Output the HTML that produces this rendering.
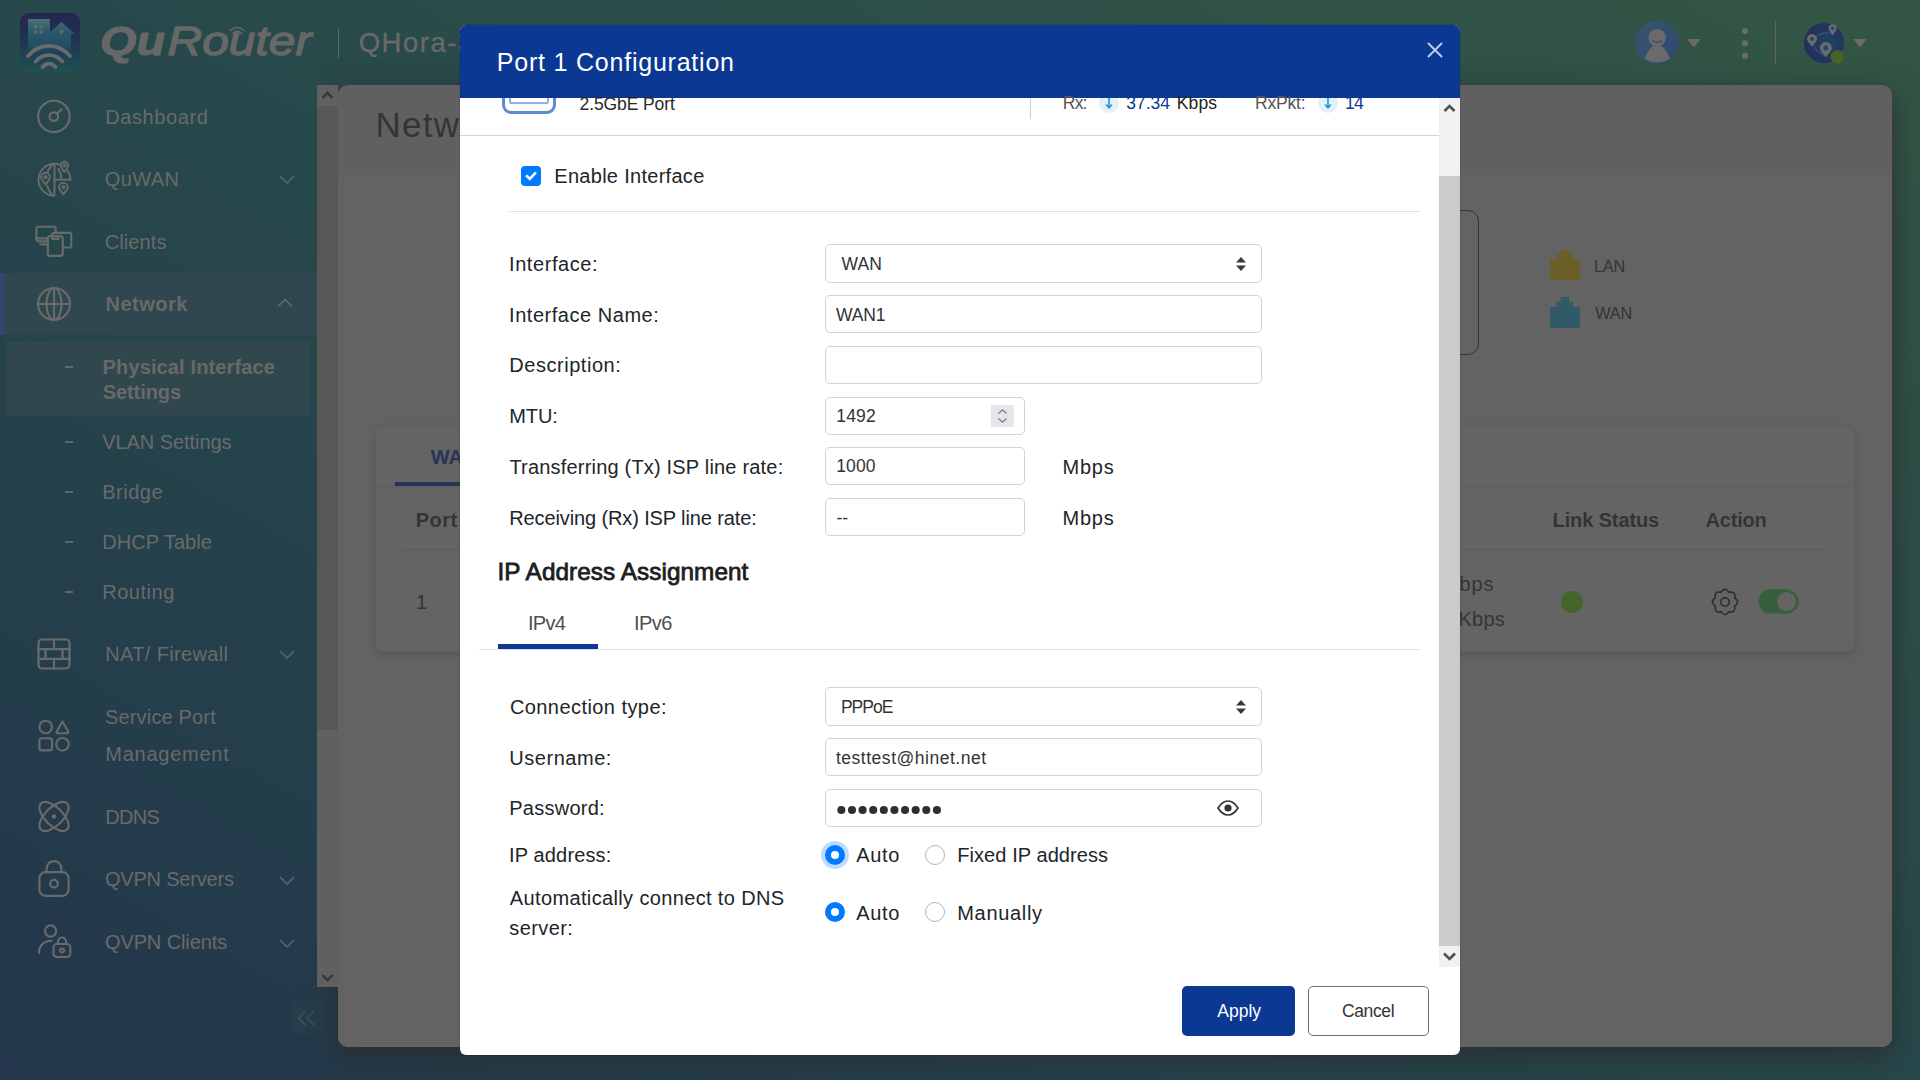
<!DOCTYPE html>
<html lang="en">
<head>
<meta charset="utf-8">
<title>QuRouter - Port 1 Configuration</title>
<style>
*{box-sizing:border-box;margin:0;padding:0}
html,body{width:1920px;height:1080px;overflow:hidden}
body{position:relative;font-family:"Liberation Sans",sans-serif;
 background:linear-gradient(to top right,#23364b 0%,#25434b 35%,#27484b 50%,#2c4e49 70%,#345644 100%);}
.a{position:absolute}
.t{position:absolute;white-space:nowrap;line-height:1}
svg{position:absolute;overflow:visible}
.ic{fill:none;stroke:#6a6a6a;stroke-linecap:round;stroke-linejoin:round}
.dash{position:absolute;left:65px;width:8px;height:2px;background:#5f666b}
.inp{position:absolute;left:825px;height:38px;background:#fff;border:1px solid #ced4da;border-radius:5px}
</style>
</head>
<body>
<!-- ===== page shell (dimmed by modal backdrop) ===== -->
<!-- app logo tile -->
<div class="a" style="left:20px;top:13px;width:60px;height:60px;border-radius:9px;background:linear-gradient(180deg,#252651 0%,#232d54 30%,#1f4054 68%,#214f4f 100%);overflow:hidden">
 <svg width="60" height="60" viewBox="0 0 60 60" style="left:0;top:0">
  <defs><linearGradient id="bld" x1="0" y1="0" x2="0" y2="1"><stop offset="0" stop-color="#4a7177"/><stop offset="0.4" stop-color="#26586a"/><stop offset="0.8" stop-color="#224e66"/><stop offset="1" stop-color="#22506a" stop-opacity="0.15"/></linearGradient></defs>
  <path d="M8 6 H30 V19 L41.5 9 L55 21 H51 V40 H8 Z" fill="url(#bld)"/>
  <g fill="#6a6866"><rect x="14" y="12" width="3.4" height="3.4"/><rect x="19.5" y="12" width="3.4" height="3.4"/><rect x="14" y="17.3" width="3.4" height="3.4"/><rect x="19.5" y="17.3" width="3.4" height="3.4"/><rect x="39.8" y="17" width="3.4" height="3.4"/></g>
  <g fill="none" stroke="#6b6b6b" stroke-width="3.700" stroke-linecap="round">
   <path d="M8 43 C 20 29.5, 38 29.5, 50 43"/>
   <path d="M15.5 48.5 C 23 40, 35 40, 42.5 48.5"/>
   <path d="M22.5 54 C 26.5 49.5, 31.5 49.5, 35.5 54"/>
  </g>
 </svg>
</div>
<!-- QuRouter wordmark -->
<svg width="215" height="44" viewBox="0 0 215 44" style="left:99px;top:20px">
 <text y="35.300" font-family="Liberation Sans, sans-serif" font-size="40.500" font-style="italic" fill="#676767" stroke="#676767" stroke-linejoin="round"><tspan x="1" font-weight="700" stroke-width="1" textLength="65" lengthAdjust="spacingAndGlyphs">Qu</tspan><tspan x="68.500" font-weight="400" stroke-width="1.300" textLength="144" lengthAdjust="spacingAndGlyphs">Router</tspan></text>
 <g fill="none" stroke="#676767" stroke-width="1.600" stroke-linecap="round"><path d="M131.500 10.500 Q138.300 4.500 145.100 10.500"/><path d="M134 13.300 Q138.300 9.500 142.600 13.300"/></g>
 <circle cx="138.300" cy="16.300" r="1.500" fill="#676767"/>
</svg>
<div class="a" style="left:338px;top:28px;width:1px;height:30px;background:#5a6a68"></div>

<!-- sidebar active bands -->
<div class="a" style="left:0;top:273px;width:317px;height:62px;background:#2f474e"></div>
<div class="a" style="left:0;top:273px;width:4px;height:62px;background:#36436b"></div>
<div class="a" style="left:6px;top:341px;width:304px;height:75px;background:#30474e"></div>
<div class="dash" style="top:366px"></div>
<div class="dash" style="top:441px"></div>
<div class="dash" style="top:491px"></div>
<div class="dash" style="top:541px"></div>
<div class="dash" style="top:591px"></div>

<!-- sidebar icons -->
<svg width="40" height="40" viewBox="0 0 40 40" style="left:34px;top:96px" class="ic" stroke-width="2.150">
 <circle cx="19.900" cy="20.400" r="15.700"/><circle cx="19.800" cy="20.600" r="4.300"/><path d="M23 17.500 L27.600 13.300"/>
</svg>
<svg width="40" height="40" viewBox="0 0 40 40" style="left:34px;top:159px" class="ic" stroke-width="1.900">
 <path d="M20.500 4.700 A16 16 0 0 0 20.500 36.700 Z"/>
 <path d="M20.500 20.700 H36.300"/>
 <path d="M20.500 4.700 A16 16 0 0 1 26 5.700"/>
 <path d="M33.300 11.200 A16 16 0 0 1 36.500 20.700"/>
 <path d="M19.500 5 Q 15 8.500 13.700 12.800"/>
 <path d="M13.300 27 Q 14.800 32.800 19.500 36.400"/>
 <path d="M24.300 9.800 Q 27.300 14.500 27.500 20.700"/>
 <path d="M11.500 25.600 C 9 22.300 7.100 20.400 7.100 18.200 A4.400 4.400 0 0 1 15.900 18.200 C 15.900 20.400 14 22.300 11.500 25.600 Z"/><circle cx="11.500" cy="18.200" r="1.200"/>
 <path d="M30.400 12.800 C 28.300 10 26.700 8.400 26.700 6.500 A3.700 3.700 0 0 1 34.100 6.500 C 34.100 8.400 32.500 10 30.400 12.800 Z"/><circle cx="30.400" cy="6.500" r="1"/>
 <path d="M29.300 35.300 C 26.800 32 24.900 30.400 24.900 28.200 A4.400 4.400 0 0 1 33.700 28.200 C 33.700 30.400 31.800 32 29.300 35.300 Z"/><circle cx="29.300" cy="28.200" r="1.200"/>
</svg>
<svg width="40" height="40" viewBox="0 0 40 40" style="left:34px;top:221px" class="ic" stroke-width="2.150">
 <path d="M13.800 20.300 H4.400 a2 2 0 0 1-2-2 V7.700 a2 2 0 0 1 2-2 H19.800 a2 2 0 0 1 2 2 V11.500"/>
 <path d="M2.400 17.300 H13.800"/><path d="M6.300 23.400 H13.800"/>
 <path d="M18.200 15 V13.800 a2 2 0 0 1 2-2 H35.300 a2 2 0 0 1 2 2 V24.500 a2 2 0 0 1-2 2 H28.800"/>
 <rect x="13.800" y="15.100" width="15" height="19.800" rx="2.500"/>
 <path d="M18.200 15.300 v2.600 h6.100 v-2.600"/>
</svg>
<svg width="40" height="40" viewBox="0 0 40 40" style="left:34px;top:284px" class="ic" stroke-width="2.150">
 <circle cx="20" cy="20" r="16"/><ellipse cx="20" cy="20" rx="7.500" ry="16"/><path d="M4 20 H36 M20 4 V36"/>
</svg>
<svg width="40" height="40" viewBox="0 0 40 40" style="left:34px;top:634px" class="ic" stroke-width="2.200">
 <rect x="4.500" y="5.500" width="31" height="29" rx="3.500"/>
 <path d="M4.500 15.200 H35.500 M4.500 24.800 H35.500 M20 5.500 V15.200 M20 24.800 V34.500 M11.500 15.200 V24.800 M28.500 15.200 V24.800"/>
</svg>
<svg width="40" height="40" viewBox="0 0 40 40" style="left:34px;top:715px" class="ic" stroke-width="2.100">
 <circle cx="11.700" cy="12" r="6.300"/>
 <path d="M28.500 6.500 L34.300 16.500 a1.200 1.200 0 0 1-1 1.800 H23.700 a1.200 1.200 0 0 1-1-1.800 Z"/>
 <rect x="5.400" y="23.200" width="12.600" height="12.200" rx="2.400"/>
 <circle cx="28.500" cy="29.300" r="6.300"/>
</svg>
<svg width="40" height="40" viewBox="0 0 40 40" style="left:34px;top:796px" class="ic" stroke-width="2.100">
 <ellipse cx="20" cy="20.500" rx="18.500" ry="9" transform="rotate(45 20 20.500)"/>
 <ellipse cx="20" cy="20.500" rx="18.500" ry="9" transform="rotate(-45 20 20.500)"/>
 <circle cx="20" cy="20.500" r="2.300" fill="#6a6a6a" stroke="none"/>
</svg>
<svg width="40" height="40" viewBox="0 0 40 40" style="left:34px;top:858px" class="ic" stroke-width="2.200">
 <rect x="5.400" y="14.200" width="29.200" height="23.600" rx="6"/>
 <path d="M12.700 14 V10.500 a7.300 7.300 0 0 1 14.600 0 V14"/>
 <circle cx="20" cy="25.700" r="3.800"/>
</svg>
<svg width="40" height="40" viewBox="0 0 40 40" style="left:34px;top:921px" class="ic" stroke-width="2.100">
 <circle cx="16.600" cy="10" r="5.600"/>
 <path d="M5 32 C 5 25, 9.500 20, 17.500 19.800"/>
 <rect x="19.500" y="23" width="16.800" height="13" rx="3.200"/>
 <path d="M24 22.800 v-2.300 a4 4 0 0 1 8 0 v2.300"/>
 <circle cx="28" cy="29.500" r="2"/>
</svg>
<!-- chevrons -->
<svg width="16" height="10" viewBox="0 0 16 10" style="left:279px;top:175px;stroke:#59666b" class="ic" stroke-width="1.600"><path d="M1.500 1.500 L8 8 L14.500 1.500"/></svg>
<svg width="16" height="10" viewBox="0 0 16 10" style="left:277px;top:298px;stroke:#666b6d" class="ic" stroke-width="1.600"><path d="M1.500 8 L8 1.500 L14.500 8"/></svg>
<svg width="16" height="10" viewBox="0 0 16 10" style="left:279px;top:650px;stroke:#59666b" class="ic" stroke-width="1.600"><path d="M1.500 1.500 L8 8 L14.500 1.500"/></svg>
<svg width="16" height="10" viewBox="0 0 16 10" style="left:279px;top:876px;stroke:#59666b" class="ic" stroke-width="1.600"><path d="M1.500 1.500 L8 8 L14.500 1.500"/></svg>
<svg width="16" height="10" viewBox="0 0 16 10" style="left:279px;top:939px;stroke:#59666b" class="ic" stroke-width="1.600"><path d="M1.500 1.500 L8 8 L14.500 1.500"/></svg>
<!-- collapse button -->
<div class="a" style="left:291px;top:1000px;width:34px;height:34px;border-radius:5px;background:#273d4b"></div>
<svg width="20" height="16" viewBox="0 0 20 16" style="left:296px;top:1010px" fill="none" stroke="#3b4e5b" stroke-width="1.800" stroke-linecap="round" stroke-linejoin="round"><path d="M9 1.500 L2.500 8 L9 14.500 M17.500 1.500 L11 8 L17.500 14.500"/></svg>

<!-- main panel -->
<div class="a" style="left:338px;top:85px;width:1554px;height:962px;border-radius:10px;background:#606060;box-shadow:0 10px 30px 1px rgba(42,44,46,.88);clip-path:polygon(-21px -60px,1620px -60px,1620px 1030px,-70px 1030px,-70px 902px,-21px 902px)"></div>
<div class="a" style="left:338px;top:175px;width:1554px;height:872px;border-radius:8px 8px 10px 10px;background:#636363"></div>
<!-- sidebar scrollbar -->
<div class="a" style="left:317px;top:85px;width:21px;height:902px;background:#606060"></div>
<div class="a" style="left:317px;top:106px;width:21px;height:624px;background:#575757"></div>
<svg width="21" height="21" viewBox="0 0 21 21" style="left:317px;top:85px" fill="none" stroke="#363636" stroke-width="2.400"><path d="M5.500 13 L10.500 8 L15.500 13"/></svg>
<svg width="21" height="21" viewBox="0 0 21 21" style="left:317px;top:967px" fill="none" stroke="#363636" stroke-width="2.400"><path d="M5.500 8 L10.500 13 L15.500 8"/></svg>

<!-- device outline -->
<div class="a" style="left:600px;top:210px;width:879px;height:145px;border:1px solid #363636;border-radius:11px"></div>
<!-- legend -->
<svg width="30" height="30" viewBox="0 0 30 30" style="left:1550px;top:250px"><path d="M0 30 V9.500 H6.500 V4 H10.500 V0 H19 V4 H23 V9.500 H30 V30 Z" fill="#6b5f27"/></svg>
<svg width="30" height="31" viewBox="0 0 30 31" style="left:1550px;top:297px"><path d="M0 31 V10 H6.500 V4.500 H10.500 V0 H19 V4.500 H23 V10 H30 V31 Z" fill="#315a68"/></svg>
<!-- table card -->
<div class="a" style="left:375px;top:425px;width:1480px;height:227px;border-radius:9px;background:#646464;border:1px solid #5f5f5f;box-shadow:0 3px 8px rgba(0,0,0,.12)"></div>
<div class="a" style="left:376px;top:486px;width:1478px;height:1px;background:#5d5d5d"></div>
<div class="a" style="left:395px;top:482px;width:160px;height:3.500px;background:#263555"></div>
<div class="a" style="left:401px;top:549px;width:1428px;height:2px;background:#5f5f5f"></div>
<div class="a" style="left:1561.300px;top:591px;width:21.500px;height:21.500px;border-radius:50%;background:#46652a"></div>
<svg width="30" height="30" viewBox="-15 -15 30 30" style="left:1709.600px;top:586.500px" fill="none" stroke="#2b2b2b" stroke-width="1.500" stroke-linejoin="miter">
 <path d="M-4.02 -9.70 Q0.00 -15.60 4.02 -9.70 Q11.03 -11.03 9.70 -4.02 Q15.60 -0.00 9.70 4.02 Q11.03 11.03 4.02 9.70 Q0.00 15.60 -4.02 9.70 Q-11.03 11.03 -9.70 4.02 Q-15.60 0.00 -9.70 -4.02 Q-11.03 -11.03 -4.02 -9.70 Z"/>
 <circle cx="0" cy="0" r="4.200"/>
</svg>
<div class="a" style="left:1758px;top:589px;width:41px;height:25px;border-radius:13px;background:#365e3e;border:1.500px solid #3a6942"></div>
<div class="a" style="left:1776.600px;top:592px;width:19px;height:19px;border-radius:50%;background:#646464"></div>

<!-- top-right header icons -->
<div class="a" style="left:1635px;top:21px;width:43.500px;height:43px;border-radius:50%;background:linear-gradient(135deg,#3a5568 0%,#334f70 50%,#2d4872 100%);overflow:hidden">
 <svg width="44" height="43" viewBox="0 0 44 43" style="left:0;top:0"><path d="M22.200 23.500 C 16 23.500 11 33 9.500 38 Q 22.200 45 34.900 38 C 33.400 33 28.400 23.500 22.200 23.500 Z" fill="#6a6a6a"/><circle cx="22.200" cy="16.800" r="8.800" fill="#6a6a6a"/><path d="M17.800 19.700 Q22.200 23.300 26.600 19.700" fill="none" stroke="#334f70" stroke-width="1.300" stroke-linecap="round"/></svg>
</div>
<svg width="14" height="9" viewBox="0 0 14 9" style="left:1687.300px;top:39px"><path d="M0 0 H13.700 L6.850 8.500 Z" fill="#6a6a6a"/></svg>
<svg width="8" height="32" viewBox="0 0 8 32" style="left:1740.800px;top:26.600px" fill="#6a6a6a"><circle cx="4" cy="4" r="3.100"/><circle cx="4" cy="16.300" r="3.100"/><circle cx="4" cy="28.800" r="3.100"/></svg>
<div class="a" style="left:1775px;top:21px;width:1px;height:43px;background:#645f68"></div>
<div class="a" style="left:1803.500px;top:22.500px;width:40px;height:40px;border-radius:50%;background:radial-gradient(circle at 62% 50%,#1f4560 0%,#22355f 45%,#212d52 100%)"></div>
<svg width="44" height="44" viewBox="0 0 44 44" style="left:1802px;top:21px">
 <path d="M11 20 Q 18 9 30 13 M12 24 Q 14 32 23 34" fill="none" stroke="#38537c" stroke-width="1.100"/>
 <g fill="#6b6b6b"><path d="M30.600 14.500 c-2.300-3-4-5-4-7.200 a4 4 0 0 1 8 0 c0 2.200-1.700 4.200-4 7.200z"/><path d="M10 25.800 c-2.800-3.700-5-5.700-5-7.700 a5 5 0 0 1 10 0 c0 2-2.200 4-5 7.700z"/><path d="M23.800 36.400 c-3.400-4.600-6-7-6-9.500 a6 6 0 0 1 12 0 c0 2.500-2.600 4.900-6 9.500z"/></g>
 <g fill="#22487a"><circle cx="30.600" cy="7.300" r="1.700"/><circle cx="10" cy="18.100" r="2.100"/><circle cx="23.800" cy="26.900" r="2.500"/></g>
 <circle cx="35.300" cy="35.700" r="6.800" fill="#476425"/>
</svg>
<svg width="14" height="9" viewBox="0 0 14 9" style="left:1852.900px;top:39px"><path d="M0 0 H14 L7 8.500 Z" fill="#6a6a6a"/></svg>

<span class="t" style="left:358.70px;top:29.22px;font-size:27.5px;color:#696969;letter-spacing:1.5px;-webkit-text-stroke:0.35px #696969;">QHora-301W</span>
<span class="t" style="left:105.26px;top:106.57px;font-size:20px;color:#6a6a6a;letter-spacing:0.598px;">Dashboard</span>
<span class="t" style="left:104.85px;top:169.07px;font-size:20px;color:#6a6a6a;letter-spacing:0.367px;">QuWAN</span>
<span class="t" style="left:104.78px;top:231.57px;font-size:20px;color:#6a6a6a;letter-spacing:0.083px;">Clients</span>
<span class="t" style="left:105.56px;top:293.87px;font-size:20px;color:#696969;font-weight:700;letter-spacing:0.469px;">Network</span>
<span class="t" style="left:102.56px;top:356.77px;font-size:20px;color:#696969;font-weight:700;letter-spacing:0.137px;">Physical Interface</span>
<span class="t" style="left:102.72px;top:381.77px;font-size:20px;color:#696969;font-weight:700;letter-spacing:-0.073px;">Settings</span>
<span class="t" style="left:102.21px;top:431.57px;font-size:20px;color:#6a6a6a;letter-spacing:-0.056px;">VLAN Settings</span>
<span class="t" style="left:102.26px;top:481.57px;font-size:20px;color:#6a6a6a;letter-spacing:0.503px;">Bridge</span>
<span class="t" style="left:102.26px;top:531.57px;font-size:20px;color:#6a6a6a;letter-spacing:0.033px;">DHCP Table</span>
<span class="t" style="left:102.26px;top:581.57px;font-size:20px;color:#6a6a6a;letter-spacing:0.515px;">Routing</span>
<span class="t" style="left:105.26px;top:643.77px;font-size:20px;color:#6a6a6a;letter-spacing:0.354px;">NAT/ Firewall</span>
<span class="t" style="left:104.99px;top:706.57px;font-size:20px;color:#6a6a6a;letter-spacing:0.165px;">Service Port</span>
<span class="t" style="left:105.26px;top:743.77px;font-size:20px;color:#6a6a6a;letter-spacing:0.749px;">Management</span>
<span class="t" style="left:105.26px;top:806.57px;font-size:20px;color:#6a6a6a;letter-spacing:-0.671px;">DDNS</span>
<span class="t" style="left:104.95px;top:868.77px;font-size:20px;color:#6a6a6a;letter-spacing:-0.190px;">QVPN Servers</span>
<span class="t" style="left:104.95px;top:931.57px;font-size:20px;color:#6a6a6a;letter-spacing:-0.100px;">QVPN Clients</span>
<span class="t" style="left:375.43px;top:107.37px;font-size:35px;color:#343434;letter-spacing:1.3px;">Network</span>
<span class="t" style="left:430.78px;top:446.97px;font-size:20px;color:#263555;font-weight:700;">WAN</span>
<span class="t" style="left:415.66px;top:509.67px;font-size:20px;color:#343434;font-weight:700;letter-spacing:0.5px;">Port</span>
<span class="t" style="left:415.98px;top:591.87px;font-size:20px;color:#343434;">1</span>
<span class="t" style="left:1552.56px;top:509.67px;font-size:20px;color:#343434;font-weight:700;letter-spacing:-0.114px;">Link Status</span>
<span class="t" style="left:1705.60px;top:509.67px;font-size:20px;color:#343434;font-weight:700;letter-spacing:-0.196px;">Action</span>
<span class="t" style="left:1459.41px;top:574.47px;font-size:20px;color:#343434;letter-spacing:0.931px;">bps</span>
<span class="t" style="left:1458.56px;top:608.87px;font-size:20px;color:#343434;letter-spacing:0.190px;">Kbps</span>
<span class="t" style="left:1593.96px;top:257.50px;font-size:16.3px;color:#343434;letter-spacing:-0.211px;">LAN</span>
<span class="t" style="left:1595.23px;top:304.50px;font-size:16.3px;color:#343434;letter-spacing:-0.195px;">WAN</span>
<!-- ===== modal ===== -->
<div class="a" style="left:460px;top:25px;width:1000px;height:1030px;border-radius:6px;background:#fff;overflow:hidden;box-shadow:0 0 0 1px rgba(0,0,0,.08)">
 <div class="a" style="left:0;top:0;width:1000px;height:73px;background:#0b3893"></div>
 <!-- scrollbar -->
 <div class="a" style="left:979px;top:73px;width:21px;height:869px;background:#f1f1f1"></div>
 <div class="a" style="left:979px;top:151px;width:21px;height:770px;background:#cbcbcb"></div>
</div>
<svg width="16" height="16" viewBox="0 0 16 16" style="left:1427px;top:42px" fill="none" stroke="#c3cde6" stroke-width="1.900" stroke-linecap="round"><path d="M1.500 1.500 L14.500 14.500 M14.500 1.500 L1.500 14.500"/></svg>
<svg width="21" height="21" viewBox="0 0 21 21" style="left:1439px;top:97px" fill="none" stroke="#505050" stroke-width="2.600"><path d="M5.500 14 L10.500 9 L15.500 14"/></svg>
<svg width="21" height="21" viewBox="0 0 21 21" style="left:1439px;top:946px" fill="none" stroke="#505050" stroke-width="2.600"><path d="M5 7.500 L10.500 13 L16 7.500"/></svg>

<!-- port summary row (scrolled, cut by header) -->
<div class="a" style="left:502px;top:80px;width:54px;height:34px;border:3px solid #5d8bd2;border-radius:9px;clip-path:inset(18px -2px -2px -2px)"></div>
<div class="a" style="left:509px;top:84px;width:40px;height:20px;border:2px solid #8fb0e2;border-radius:2px;clip-path:inset(14px -2px -2px -2px)"></div>
<div class="a" style="left:1030px;top:98px;width:1px;height:21px;background:#cfcfcf"></div>
<div class="a" style="left:1099px;top:98px;width:20px;height:15px;overflow:hidden"><div class="a" style="left:0;top:-5px;width:20px;height:20px;border-radius:50%;background:#e4f0f8"></div></div>
<svg width="10" height="12" viewBox="0 0 10 12" style="left:1104px;top:98px" fill="none" stroke="#1b97d5" stroke-width="1.600"><path d="M5 0 V9.500 M2 6.500 L5 9.800 L8 6.500"/></svg>
<div class="a" style="left:1318px;top:98px;width:20px;height:15px;overflow:hidden"><div class="a" style="left:0;top:-5px;width:20px;height:20px;border-radius:50%;background:#e4f0f8"></div></div>
<svg width="10" height="12" viewBox="0 0 10 12" style="left:1323px;top:98px" fill="none" stroke="#1b97d5" stroke-width="1.600"><path d="M5 0 V9.500 M2 6.500 L5 9.800 L8 6.500"/></svg>
<div class="a" style="left:460px;top:135px;width:979px;height:1px;background:#d4d4d4"></div>

<!-- enable checkbox -->
<div class="a" style="left:521px;top:166px;width:20px;height:20px;border-radius:4px;background:#007bff"></div>
<svg width="20" height="20" viewBox="0 0 20 20" style="left:521px;top:166px" fill="none" stroke="#fff" stroke-width="2.600" stroke-linecap="square"><path d="M6 10.300 L8.800 13 L14 7.300"/></svg>
<div class="a" style="left:509px;top:211px;width:911px;height:1px;background:#dee2e6"></div>

<!-- inputs -->
<div class="inp" style="top:244px;width:437px;height:39px"></div>
<div class="inp" style="top:295px;width:437px"></div>
<div class="inp" style="top:346px;width:437px"></div>
<div class="inp" style="top:397px;width:200px"></div>
<div class="inp" style="top:447px;width:200px"></div>
<div class="inp" style="top:498px;width:200px"></div>
<div class="inp" style="top:687px;width:437px;height:39px"></div>
<div class="inp" style="top:738px;width:437px"></div>
<div class="inp" style="top:789px;width:437px"></div>
<!-- select arrows -->
<svg width="10" height="14" viewBox="0 0 10 14" style="left:1236px;top:256.500px" fill="#343a40"><path d="M0 5.500 L5 0 L10 5.500 Z M0 8.500 L5 14 L10 8.500 Z"/></svg>
<svg width="10" height="14" viewBox="0 0 10 14" style="left:1236px;top:699.500px" fill="#343a40"><path d="M0 5.500 L5 0 L10 5.500 Z M0 8.500 L5 14 L10 8.500 Z"/></svg>
<!-- number spinner -->
<div class="a" style="left:991px;top:405px;width:23px;height:22px;background:#e5e5ea"></div>
<svg width="23" height="22" viewBox="0 0 23 22" style="left:991px;top:405px" fill="none" stroke="#7a7a80" stroke-width="1.300"><path d="M7.500 8.500 L11.500 4.800 L15.500 8.500 M7.500 13.500 L11.500 17.200 L15.500 13.500"/></svg>
<!-- password dots + eye -->
<svg width="110" height="10" viewBox="0 0 110 10" style="left:837px;top:804.800px" fill="#2f2f2f">
 <circle cx="4.35" cy="5" r="4.05"/><circle cx="14.97" cy="5" r="4.05"/><circle cx="25.58" cy="5" r="4.05"/><circle cx="36.20" cy="5" r="4.05"/><circle cx="46.82" cy="5" r="4.05"/><circle cx="57.44" cy="5" r="4.05"/><circle cx="68.05" cy="5" r="4.05"/><circle cx="78.67" cy="5" r="4.05"/><circle cx="89.29" cy="5" r="4.05"/><circle cx="99.90" cy="5" r="4.05"/>
</svg>
<svg width="22" height="16" viewBox="0 0 22 16" style="left:1217px;top:799.500px"><path d="M1 8 C 4.500 2.300, 8 1, 11 1 S 17.500 2.300, 21 8 C 17.500 13.700, 14 15, 11 15 S 4.500 13.700, 1 8 Z" fill="none" stroke="#333" stroke-width="1.700"/><circle cx="11" cy="8" r="3.600" fill="#333"/></svg>

<!-- section tabs -->
<div class="a" style="left:479px;top:649px;width:941px;height:1px;background:#dee2e6"></div>
<div class="a" style="left:498px;top:644px;width:100px;height:5px;background:#0b3893"></div>

<!-- radios -->
<div class="a" style="left:821px;top:841px;width:28px;height:28px;border-radius:50%;background:#bfdcfc"></div>
<div class="a" style="left:825px;top:845px;width:20px;height:20px;border-radius:50%;background:#007bff"></div>
<div class="a" style="left:831px;top:851px;width:8px;height:8px;border-radius:50%;background:#fff"></div>
<div class="a" style="left:925px;top:845px;width:20px;height:20px;border-radius:50%;background:#fff;border:1px solid #adb5bd"></div>
<div class="a" style="left:825px;top:902px;width:20px;height:20px;border-radius:50%;background:#007bff"></div>
<div class="a" style="left:831px;top:908px;width:8px;height:8px;border-radius:50%;background:#fff"></div>
<div class="a" style="left:925px;top:902px;width:20px;height:20px;border-radius:50%;background:#fff;border:1px solid #adb5bd"></div>

<!-- footer buttons -->
<div class="a" style="left:1182px;top:986px;width:113px;height:50px;border-radius:5px;background:#0b3893"></div>
<div class="a" style="left:1308px;top:986px;width:121px;height:50px;border-radius:5px;background:#fff;border:1px solid #6f6f6f"></div>

<!-- ===== all text ===== -->
<span class="t" style="left:496.85px;top:49.64px;font-size:25px;color:#fff;letter-spacing:0.780px;">Port 1 Configuration</span>
<span class="t" style="left:579.52px;top:95.99px;font-size:17.5px;color:#2a2a2a;letter-spacing:-0.100px;">2.5GbE Port</span>
<span class="t" style="left:1062.86px;top:94.99px;font-size:17.5px;color:#555;letter-spacing:-0.858px;">Rx:</span>
<span class="t" style="left:1126.23px;top:94.99px;font-size:17.5px;color:#0b3893;letter-spacing:-0.029px;">37.34</span>
<span class="t" style="left:1176.86px;top:94.99px;font-size:17.5px;color:#222;letter-spacing:0.059px;">Kbps</span>
<span class="t" style="left:1255.06px;top:94.99px;font-size:17.5px;color:#555;letter-spacing:-0.203px;">RxPkt:</span>
<span class="t" style="left:1344.97px;top:94.99px;font-size:17.5px;color:#0b3893;letter-spacing:-0.723px;">14</span>
<span class="t" style="left:554.26px;top:165.77px;font-size:20px;color:#212529;letter-spacing:0.292px;">Enable Interface</span>
<span class="t" style="left:509.05px;top:254.37px;font-size:20px;color:#212529;letter-spacing:0.565px;">Interface:</span>
<span class="t" style="left:509.05px;top:304.77px;font-size:20px;color:#212529;letter-spacing:0.534px;">Interface Name:</span>
<span class="t" style="left:509.26px;top:355.47px;font-size:20px;color:#212529;letter-spacing:0.542px;">Description:</span>
<span class="t" style="left:509.26px;top:406.27px;font-size:20px;color:#212529;letter-spacing:-0.108px;">MTU:</span>
<span class="t" style="left:509.45px;top:457.07px;font-size:20px;color:#212529;letter-spacing:0.190px;">Transferring (Tx) ISP line rate:</span>
<span class="t" style="left:509.26px;top:507.87px;font-size:20px;color:#212529;letter-spacing:-0.121px;">Receiving (Rx) ISP line rate:</span>
<span class="t" style="left:1062.56px;top:457.07px;font-size:20px;color:#212529;letter-spacing:0.752px;">Mbps</span>
<span class="t" style="left:1062.56px;top:507.87px;font-size:20px;color:#212529;letter-spacing:0.752px;">Mbps</span>
<span class="t" style="left:497.46px;top:559.83px;font-size:24.3px;color:#1d1d1f;letter-spacing:0.075px;-webkit-text-stroke:0.8px #1d1d1f;">IP Address Assignment</span>
<span class="t" style="left:528.05px;top:612.87px;font-size:20px;color:#495057;letter-spacing:-0.733px;">IPv4</span>
<span class="t" style="left:634.05px;top:612.87px;font-size:20px;color:#495057;letter-spacing:-0.569px;">IPv6</span>
<span class="t" style="left:509.88px;top:697.07px;font-size:20px;color:#212529;letter-spacing:0.435px;">Connection type:</span>
<span class="t" style="left:509.36px;top:747.97px;font-size:20px;color:#212529;letter-spacing:0.520px;">Username:</span>
<span class="t" style="left:509.26px;top:798.37px;font-size:20px;color:#212529;letter-spacing:0.249px;">Password:</span>
<span class="t" style="left:509.05px;top:845.07px;font-size:20px;color:#212529;letter-spacing:0.146px;">IP address:</span>
<span class="t" style="left:509.86px;top:888.07px;font-size:20px;color:#212529;letter-spacing:0.359px;">Automatically connect to DNS</span>
<span class="t" style="left:509.34px;top:918.07px;font-size:20px;color:#212529;letter-spacing:0.393px;">server:</span>
<span class="t" style="left:856.16px;top:845.07px;font-size:20px;color:#212529;letter-spacing:0.708px;">Auto</span>
<span class="t" style="left:957.26px;top:845.07px;font-size:20px;color:#212529;letter-spacing:0.070px;">Fixed IP address</span>
<span class="t" style="left:856.16px;top:903.07px;font-size:20px;color:#212529;letter-spacing:0.708px;">Auto</span>
<span class="t" style="left:957.26px;top:903.07px;font-size:20px;color:#212529;letter-spacing:0.676px;">Manually</span>
<span class="t" style="left:841.42px;top:255.79px;font-size:17.5px;color:#333;letter-spacing:0.208px;">WAN</span>
<span class="t" style="left:836.12px;top:306.79px;font-size:17.5px;color:#333;letter-spacing:-0.197px;">WAN1</span>
<span class="t" style="left:836.27px;top:408.39px;font-size:17.5px;color:#333;letter-spacing:0.159px;">1492</span>
<span class="t" style="left:836.27px;top:458.49px;font-size:17.5px;color:#333;letter-spacing:0.093px;">1000</span>
<span class="t" style="left:836.42px;top:509.99px;font-size:17.5px;color:#333;">--</span>
<span class="t" style="left:840.96px;top:698.79px;font-size:17.5px;color:#333;letter-spacing:-1.012px;">PPPoE</span>
<span class="t" style="left:835.94px;top:749.99px;font-size:17.5px;color:#333;letter-spacing:0.521px;">testtest@hinet.net</span>
<span class="t" style="left:1217.37px;top:1002.69px;font-size:17.5px;color:#fff;letter-spacing:-0.028px;">Apply</span>
<span class="t" style="left:1342.01px;top:1002.69px;font-size:17.5px;color:#333;letter-spacing:-0.385px;">Cancel</span>
</body>
</html>
